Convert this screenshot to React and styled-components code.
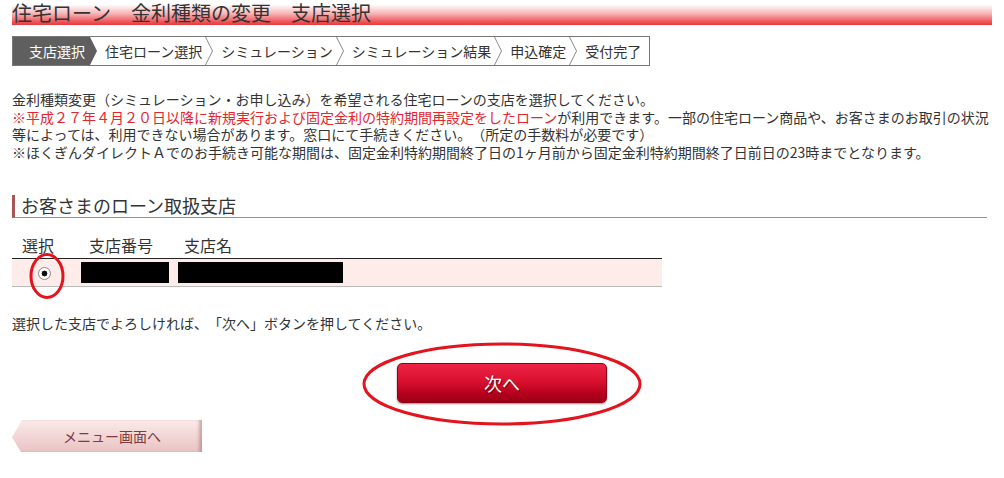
import { Fragment } from "react"
import styled, { createGlobalStyle } from "styled-components"

const GlobalStyle = createGlobalStyle`
  html, body {
    margin: 0;
    padding: 0;
    background: #fff;
  }
  body {
    font-family: "Noto Sans CJK JP", "Noto Sans", sans-serif;
    color: #333;
    text-spacing-trim: space-all;
  }
`

const Page = styled.div`
  width: 1004px;
  box-sizing: border-box;
  padding: 0 12px;
`

const Title = styled.h1`
  margin: 0;
  height: 25px;
  line-height: 25px;
  font-size: 20px;
  font-weight: normal;
  color: #333;
  background: linear-gradient(to bottom, #fff 0%, #fff 18%, #f7b3b4 55%, #ee5a5d 85%, #e8383b 100%);
`

const StepBar = styled.div`
  display: flex;
  align-items: stretch;
  width: 638px;
  height: 30px;
  box-sizing: border-box;
  margin-top: 11px;
  border: 1px solid #777;
  font-size: 14px;
`

const ActiveStep = styled.div`
  display: flex;
  align-items: center;
  padding: 0 5px 0 16px;
  background: #5f5f5f;
  color: #fff;
`

const Step = styled.div`
  display: flex;
  align-items: center;
  padding: 0 3px 0 8px;
  color: #333;
  white-space: nowrap;
`

const StepSvg = styled.svg`
  flex: none;
  width: ${(p) => p.w}px;
  height: 100%;
  display: block;
`

const Lead = styled.p`
  margin: 25px 0 0;
  font-size: 14px;
  line-height: 17.5px;
  white-space: nowrap;
`

const Red = styled.span`
  color: #e3262e;
`

const SectionTitle = styled.h2`
  margin: 34px 0 0;
  width: 975px;
  height: 23px;
  box-sizing: border-box;
  padding-left: 6px;
  border-left: 3px solid #a85656;
  border-bottom: 1px solid #b98282;
  font-size: 18px;
  line-height: 21px;
  font-weight: normal;
  color: #333;
`

const Table = styled.table`
  margin-top: 14px;
  width: 650px;
  border-collapse: collapse;
  table-layout: fixed;
`

const Th = styled.th`
  box-sizing: border-box;
  width: ${(p) => (p.w ? `${p.w}px` : "auto")};
  height: 26px;
  padding: 0 0 0 ${(p) => p.pl}px;
  text-align: left;
  vertical-align: middle;
  font-size: 16px;
  font-weight: normal;
  border-bottom: 1px solid #222;
`

const Td = styled.td`
  position: relative;
  height: 27px;
  padding: 0 ${(p) => p.px}px;
  background: #fdecea;
  border-bottom: 1px solid #bbb;
  text-align: ${(p) => p.align || "left"};
  vertical-align: middle;
`

const Redacted = styled.div`
  width: ${(p) => p.w}px;
  height: 21px;
  background: #000;
`

const Radio = styled.input`
  appearance: none;
  display: block;
  margin: 3px auto 0;
  width: 13px;
  height: 13px;
  border-radius: 50%;
  border: 1px solid #8a8a8a;
  background: radial-gradient(circle, #111 0 2.6px, #fff 3.2px);
  box-sizing: border-box;
`

const Mark = styled.svg`
  position: absolute;
  left: ${(p) => p.x}px;
  top: ${(p) => p.y}px;
  overflow: visible;
  pointer-events: none;
`

const Note = styled.p`
  margin: 28px 0 0;
  font-size: 14px;
  line-height: 17.5px;
`

const NextRow = styled.div`
  display: flex;
  justify-content: center;
  margin-top: 31px;
`

const NextWrap = styled.div`
  position: relative;
  width: 210px;
  height: 40px;
`

const NextButton = styled.button`
  width: 210px;
  height: 40px;
  border: 1px solid #8c0018;
  border-radius: 5px;
  background: linear-gradient(to bottom, #ee2346 0%, #d9112f 45%, #b3001d 80%, #9c0016 100%);
  box-shadow: 0 1px 2px rgba(0, 0, 0, 0.45);
  color: #fff;
  font-family: inherit;
  font-size: 18px;
  text-shadow: 1px 1px 1px rgba(60, 0, 0, 0.7);
  cursor: pointer;
`

const MenuButton = styled.button`
  display: block;
  margin-top: 17px;
  width: 190px;
  height: 32px;
  padding: 0 0 0 10px;
  border: 0;
  clip-path: polygon(10px 0, 100% 0, 100% 100%, 9px 100%, 0 54%);
  background: linear-gradient(to bottom, #fbeaea 0%, #f1d2d2 60%, #e9c3c3 100%);
  box-shadow: inset -4px 0 3px -1px rgba(160, 100, 100, 0.45);
  color: #7b3d3d;
  font-family: inherit;
  font-size: 14px;
  cursor: pointer;
`

const steps = ["住宅ローン選択", "シミュレーション", "シミュレーション結果", "申込確定", "受付完了"]

const App = () => {
  return (
    <Page>
      <GlobalStyle />
      <Title>住宅ローン　金利種類の変更　支店選択</Title>

      <StepBar>
        <ActiveStep>支店選択</ActiveStep>
        <StepSvg w={7} viewBox="0 0 7 28" preserveAspectRatio="none">
          <polygon points="0,0 7,14 0,28" fill="#5f5f5f" />
        </StepSvg>
        {steps.map((s, i) => (
          <Fragment key={s}>
            <Step>{s}</Step>
            {i < steps.length - 1 && (
              <StepSvg w={8} viewBox="0 0 8 28" preserveAspectRatio="none">
                <polyline points="0.5,0 7.5,14 0.5,28" fill="none" stroke="#8a8a8a" strokeWidth="1" />
              </StepSvg>
            )}
          </Fragment>
        ))}
      </StepBar>

      <Lead>
        金利種類変更（シミュレーション・お申し込み）を希望される住宅ローンの支店を選択してください。
        <br />
        <Red>※平成２７年４月２０日以降に新規実行および固定金利の特約期間再設定をしたローン</Red>
        が利用できます。一部の住宅ローン商品や、お客さまのお取引の状況
        <br />
        等によっては、利用できない場合があります。窓口にて手続きください。（所定の手数料が必要です）
        <br />
        ※ほくぎんダイレクトＡでのお手続き可能な期間は、固定金利特約期間終了日の1ヶ月前から固定金利特約期間終了日前日の23時までとなります。
      </Lead>

      <SectionTitle>お客さまのローン取扱支店</SectionTitle>

      <Table>
        <thead>
          <tr>
            <Th w={65} pl={10}>選択</Th>
            <Th w={96} pl={12}>支店番号</Th>
            <Th pl={11}>支店名</Th>
          </tr>
        </thead>
        <tbody>
          <tr>
            <Td px={0} align="center">
              <Radio type="radio" name="branch" defaultChecked />
              <Mark x={16} y={-7} width="38" height="48">
                <ellipse cx="19" cy="24" rx="16" ry="21.5" fill="none" stroke="#e3141e" strokeWidth="3" />
              </Mark>
            </Td>
            <Td px={4}>
              <Redacted w={88} />
            </Td>
            <Td px={5}>
              <Redacted w={165} />
            </Td>
          </tr>
        </tbody>
      </Table>

      <Note>選択した支店でよろしければ、「次へ」ボタンを押してください。</Note>

      <NextRow>
        <NextWrap>
          <NextButton>次へ</NextButton>
          <Mark x={-38} y={-22} width="286" height="86">
            <ellipse cx="143" cy="43" rx="138" ry="40" fill="none" stroke="#e3141e" strokeWidth="3" />
          </Mark>
        </NextWrap>
      </NextRow>

      <MenuButton>メニュー画面へ</MenuButton>
    </Page>
  )
}

export default App
